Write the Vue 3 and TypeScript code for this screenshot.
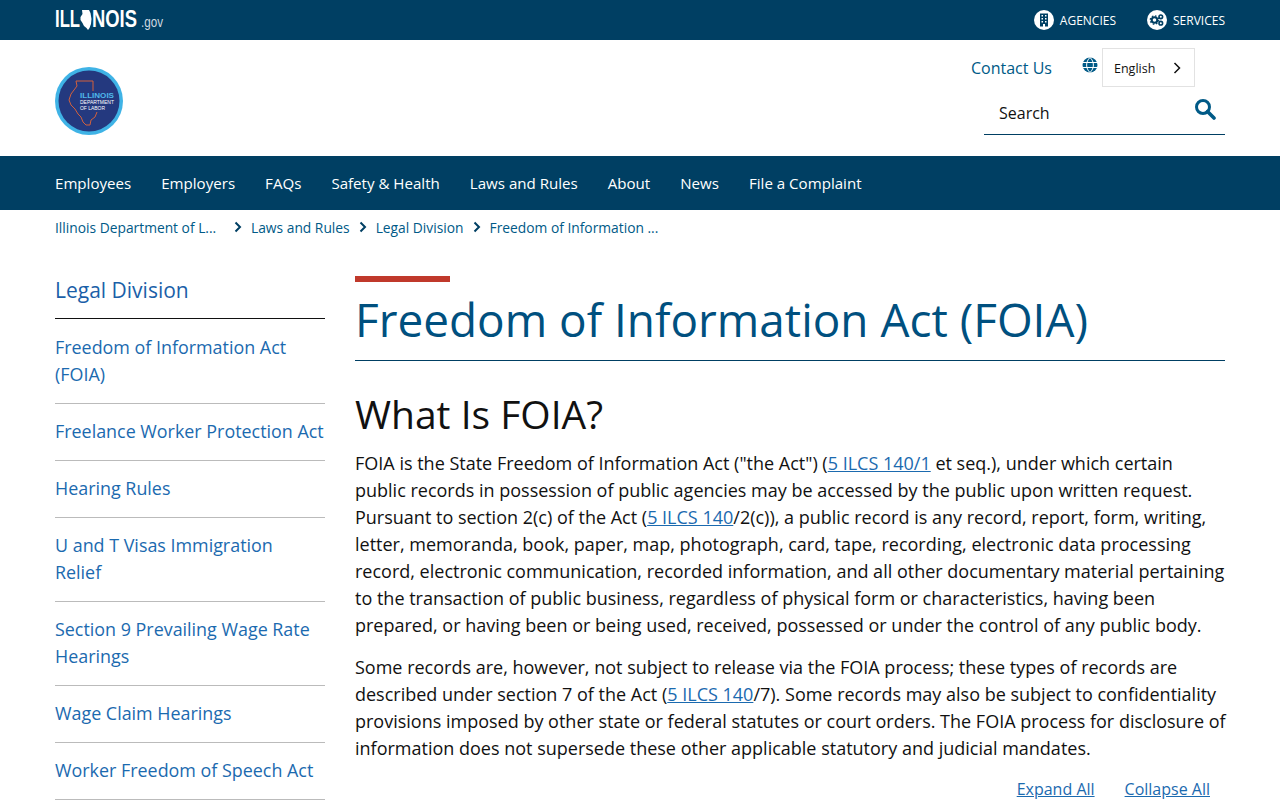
<script setup lang="ts">
const menu = ['Employees','Employers','FAQs','Safety & Health','Laws and Rules','About','News','File a Complaint']
const crumbs = [
  { t: 'Laws and Rules' }, { t: 'Legal Division' }, { t: 'Freedom of Information ...' }
]
const side: string[] = ['Freedom of Information Act (FOIA)','Freelance Worker Protection Act','Hearing Rules','U and T Visas Immigration\nRelief','Section 9 Prevailing Wage Rate Hearings','Wage Claim Hearings','Worker Freedom of Speech Act']
</script>

<template>
  <div class="page">
    <header class="topbar">
      <svg class="brand" viewBox="0 0 110 24" width="110" height="24">
        <text x="0" y="21" class="brand-name" textLength="25" lengthAdjust="spacingAndGlyphs">ILL</text>
        <path fill="#fff" d="M27 4h7l1.500 3 1 6-.500 5-1.500 4-1.500 2-1.500-2-2.500-2-1.500-3-2-3v-3l2-3z"/>
        <text x="37" y="21" class="brand-name" textLength="45" lengthAdjust="spacingAndGlyphs">NOIS</text>
        <text x="86" y="21" class="brand-gov" textLength="22" lengthAdjust="spacingAndGlyphs">.gov</text>
      </svg>
      <div class="top-links">
        <a class="top-link">
          <span class="top-ico">
            <svg viewBox="0 0 20 20" width="20" height="20"><circle cx="10" cy="10" r="10" fill="#fff"/><path fill="#003f63" fill-rule="evenodd" d="M6 3.500h8v13h-3v-2.500H9v2.500H6zM7.500 5v1.500H9V5zm3.500 0v1.500h1.500V5zM7.500 8v1.500H9V8zm3.500 0v1.500h1.500V8zm-3.500 3v1.500H9V11zm3.500 0v1.500h1.500V11z"/></svg>
          </span>AGENCIES
        </a>
        <a class="top-link">
          <span class="top-ico">
            <svg viewBox="0 0 20 20" width="20" height="20"><circle cx="10" cy="10" r="10" fill="#fff"/><circle cx="7.500" cy="10" r="2.800" fill="none" stroke="#003f63" stroke-width="2"/><circle cx="7.500" cy="10" r="4.200" fill="none" stroke="#003f63" stroke-width="1.200" stroke-dasharray="1.600 1.700"/><circle cx="13.800" cy="6.800" r="1.800" fill="none" stroke="#003f63" stroke-width="1.600"/><circle cx="13.800" cy="13.200" r="1.800" fill="none" stroke="#003f63" stroke-width="1.600"/></svg>
          </span>SERVICES
        </a>
      </div>
    </header>

    <section class="masthead">
      <svg class="seal" viewBox="0 0 68 68" width="68" height="68">
        <circle cx="34" cy="34" r="34" fill="#3fb3e6"/>
        <circle cx="34" cy="34" r="30.500" fill="#24397f"/>
        <path fill="none" stroke="#d2603c" stroke-width="1" d="M38 24V14H21l1 5-3 4-3 4-2 6 2 5 4 4 3 5 3 3 2 5 3 3h4l1-5 4-3 2-5"/>
        <text x="25" y="30.500" class="seal-a" textLength="34" lengthAdjust="spacingAndGlyphs">ILLINOIS</text>
        <text x="25" y="37" class="seal-b" textLength="34" lengthAdjust="spacingAndGlyphs">DEPARTMENT</text>
        <text x="25" y="43" class="seal-b" textLength="25" lengthAdjust="spacingAndGlyphs">OF LABOR</text>
      </svg>
      <div class="tools">
        <div class="tools-row">
          <a class="contact">Contact Us</a>
          <svg class="globe" viewBox="0 0 16 16" width="16" height="16"><circle cx="8" cy="8" r="7.500" fill="#005a87"/><path fill="none" stroke="#fff" stroke-width="1" d="M.5 5.500h15M.5 10.500h15M8 .5c-4.500 4-4.500 11 0 15M8 .5c4.500 4 4.500 11 0 15"/></svg>
          <div class="lang"><span>English</span>
            <svg viewBox="0 0 8 12" width="8" height="12"><path d="M1.500 1l5 5-5 5" fill="none" stroke="#111" stroke-width="1.500"/></svg>
          </div>
        </div>
        <div class="search">
          <span>Search</span>
          <svg viewBox="0 0 22 22" width="22" height="22"><circle cx="9" cy="9" r="6.500" fill="none" stroke="#005a87" stroke-width="3"/><path d="M13.500 13.500l6.500 6.500" stroke="#005a87" stroke-width="3.600" stroke-linecap="round"/></svg>
        </div>
      </div>
    </section>

    <nav class="mainnav">
      <a v-for="m in menu" :key="m">{{ m }}</a>
    </nav>

    <nav class="crumbs">
      <a class="crumb-first">Illinois Department of L...</a>
      <template v-for="c in crumbs" :key="c.t">
        <svg viewBox="0 0 8 12" width="8" height="12"><path d="M1.500 1.500l4.500 4.500-4.500 4.500" fill="none" stroke="#003f63" stroke-width="2"/></svg>
        <a>{{ c.t }}</a>
      </template>
    </nav>

    <div class="layout">
      <aside class="side">
        <h2>Legal Division</h2>
        <a v-for="s in side" :key="s">{{ s }}</a>
      </aside>
      <main class="content">
        <div class="accent"></div>
        <h1>Freedom of Information Act (FOIA)</h1>
        <h2>What Is FOIA?</h2>
        <p>FOIA is the State Freedom of Information Act ("the Act") (<a>5 ILCS 140/1</a> et seq.), under which certain public records in possession of public agencies may be accessed by the public upon written request. Pursuant to section 2(c) of the Act (<a>5 ILCS 140</a>/2(c)), a public record is any record, report, form, writing, letter, memoranda, book, paper, map, photograph, card, tape, recording, electronic data processing record, electronic communication, recorded information, and all other documentary material pertaining to the transaction of public business, regardless of physical form or characteristics, having been prepared, or having been or being used, received, possessed or under the control of any public body.</p>
        <p>Some records are, however, not subject to release via the FOIA process; these types of records are described under section 7 of the Act (<a>5 ILCS 140</a>/7). Some records may also be subject to confidentiality provisions imposed by other state or federal statutes or court orders. The FOIA process for disclosure of information does not supersede these other applicable statutory and judicial mandates.</p>
        <div class="expand"><a>Expand All</a><a>Collapse All</a></div>
      </main>
    </div>
  </div>
</template>

<style>
html, body { margin: 0; overflow: hidden; background: #fff; }
</style>

<style scoped>
.page { width: 1280px; height: 800px; overflow: hidden; font-family: "Open Sans", "Noto Sans", sans-serif; color: #111; }
.topbar { height: 40px; background: #003f63; padding: 0 55px; display: flex; justify-content: space-between; align-items: center; color: #fff; }
.brand { display: block; overflow: visible; margin-top: -4px; }
.brand-name { font-family: "Liberation Sans", sans-serif; font-size: 23.500px; font-weight: 700; fill: #fff; }
.brand-gov { font-family: "Liberation Sans", sans-serif; font-size: 15px; fill: #cfd9e0; }
.top-links { display: flex; gap: 31px; }
.top-link { display: flex; align-items: center; gap: 6px; font-size: 12px; }
.top-ico { display: flex; }
.masthead { height: 116px; padding: 0 55px; display: flex; justify-content: space-between; }
.seal { margin-top: 27px; }
.tools { width: 254px; display: flex; flex-direction: column; align-items: flex-end; }
.tools-row { display: flex; align-items: center; margin-top: 8px; width: 254px; }
.contact { font-size: 16px; color: #005a87; width: 111px; }
.globe { margin-right: 4px; margin-top: -5px; }
.lang { width: 93px; height: 39px; border: 1px solid #e2e2e2; display: flex; align-items: center; justify-content: space-between; padding: 1px 13px 0 11px; box-sizing: border-box; font-size: 12.500px; }
.search { width: 241px; height: 48px; border-bottom: 1px solid #003f63; display: flex; align-items: center; justify-content: space-between; padding: 0 9px 0 15px; box-sizing: border-box; font-size: 16px; }
.search span { margin-top: 5px; }
.search svg { margin-top: -4px; }
.mainnav { height: 54px; background: #003f63; padding: 0 55px; display: flex; align-items: center; gap: 30px; }
.mainnav a { color: #fff; font-size: 15.100px; }
.crumbs { height: 36px; padding: 0 55px 2px; box-sizing: border-box; display: flex; align-items: center; gap: 9px; font-size: 13.800px; color: #005a87; }
.crumb-first { width: 170px; }
.layout { display: flex; gap: 30px; padding: 30px 55px 0; }
.side { width: 270px; flex: none; }
.side h2 { font-size: 21px; font-weight: 400; color: #1b5fa8; margin: 0; padding: 0 0 13px; line-height: 29px; border-bottom: 1px solid #111; }
.side a { display: block; font-size: 17.900px; line-height: 27px; color: #1b6aaf; padding: 14px 0 15px; border-bottom: 1px solid #bbb; white-space: pre-line; }
.side h2 + a { padding-top: 15px; }
.content { flex: 1; min-width: 0; }
.accent { width: 95px; height: 6px; background: #c0392b; }
.content h1 { font-size: 45.900px; font-weight: 400; line-height: 60px; color: #00507f; margin: 0; padding: 7px 0 11px; border-bottom: 1px solid #003f63; }
.content h2 { font-size: 39px; font-weight: 400; line-height: 48px; color: #111; margin: 29px 0 12px; }
.content p { font-size: 18px; line-height: 27px; margin: 0 -2px 15px 0; }
.content p a { color: #1b6aaf; text-decoration: underline; }
.expand { display: flex; justify-content: flex-end; gap: 30px; padding-right: 15px; padding-top: 1px; font-size: 16px; color: #1b6aaf; }
.expand a { text-decoration: underline; }
.seal-a { font-family: "Liberation Sans", sans-serif; font-weight: 700; font-size: 6.500px; fill: #4fb8ea; }
.seal-b { font-family: "Liberation Sans", sans-serif; font-size: 4.500px; fill: #fff; }
</style>
